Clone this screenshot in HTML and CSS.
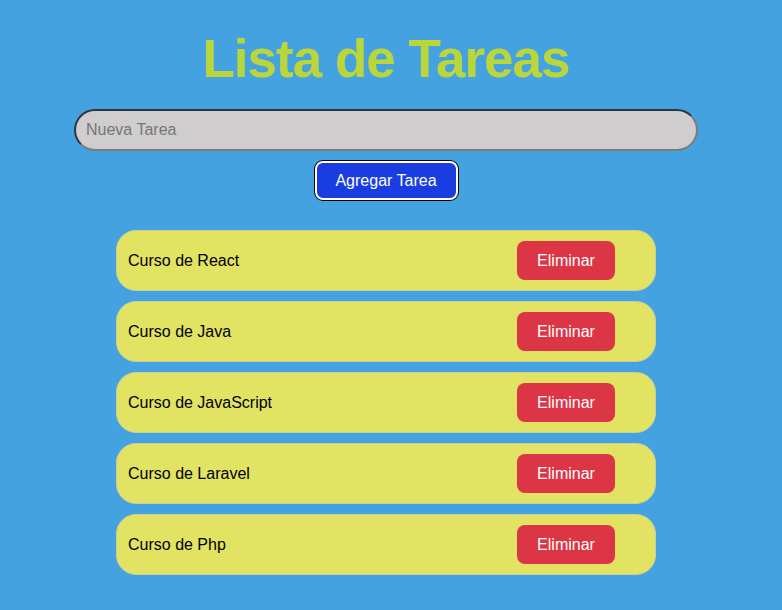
FILE: index.html
```html
<!DOCTYPE html>
<html lang="es">
<head>
<meta charset="utf-8">
<title>Lista de Tareas</title>
<link rel="stylesheet" href="styles.css">
</head>
<body>
<div class="app">
  <h1 class="title">Lista de Tareas</h1>
  <div class="form">
    <input class="task-input" type="text" placeholder="Nueva Tarea">
    <button class="add-btn" type="button">Agregar Tarea</button>
  </div>
  <ul class="tasks">
    <li class="task"><span class="task-name">Curso de React</span><button class="del-btn" type="button">Eliminar</button></li>
    <li class="task"><span class="task-name">Curso de Java</span><button class="del-btn" type="button">Eliminar</button></li>
    <li class="task"><span class="task-name">Curso de JavaScript</span><button class="del-btn" type="button">Eliminar</button></li>
    <li class="task"><span class="task-name">Curso de Laravel</span><button class="del-btn" type="button">Eliminar</button></li>
    <li class="task"><span class="task-name">Curso de Php</span><button class="del-btn" type="button">Eliminar</button></li>
  </ul>
</div>
</body>
</html>
```
FILE: styles.css
```css
html, body {
  margin: 0;
  padding: 0;
  background: #45a2e0;
  font-family: "Liberation Sans", Arial, sans-serif;
}
.app {
  width: 772px;
  display: flex;
  flex-direction: column;
  align-items: center;
  padding-top: 27px;
}
.title {
  margin: 0;
  font-size: 53px;
  line-height: 64px;
  letter-spacing: -1px;
  font-weight: bold;
  color: #bbd63b;
}
.form {
  margin-top: 18px;
  display: flex;
  flex-direction: column;
  align-items: center;
  gap: 10px;
}
.task-input {
  box-sizing: border-box;
  width: 624px;
  height: 42px;
  border-radius: 21px;
  border-width: 2px;
  border-style: solid;
  border-color: #2a3642 #7b7b7b #7b7b7b #2a3642;
  background: #cfcdcd;
  padding: 0 10px;
  font-family: "Liberation Sans", Arial, sans-serif;
  font-size: 16px;
  color: #333;
  outline: none;
}
.task-input::placeholder {
  color: #767676;
}
.add-btn {
  box-sizing: border-box;
  width: 143px;
  height: 39px;
  background: #1a3de2;
  color: #fff;
  border: 2px solid #fff;
  box-shadow: 0 0 0 1px #000;
  border-radius: 8px;
  font-family: "Liberation Sans", Arial, sans-serif;
  font-size: 16px;
}
.tasks {
  list-style: none;
  margin: 30px 0 0;
  padding: 0;
  display: flex;
  flex-direction: column;
  gap: 10px;
}
.task {
  box-sizing: border-box;
  width: 540px;
  height: 61px;
  display: flex;
  align-items: center;
  justify-content: space-between;
  padding: 0 40px 0 11px;
  background: #e2e263;
  border: 1px solid #c9cf9a;
  border-radius: 20px;
  font-size: 16px;
  color: #000;
}
.del-btn {
  box-sizing: border-box;
  width: 98px;
  height: 39px;
  background: #dc3545;
  color: #fff;
  border: none;
  border-radius: 8px;
  font-family: "Liberation Sans", Arial, sans-serif;
  font-size: 16px;
}
```
